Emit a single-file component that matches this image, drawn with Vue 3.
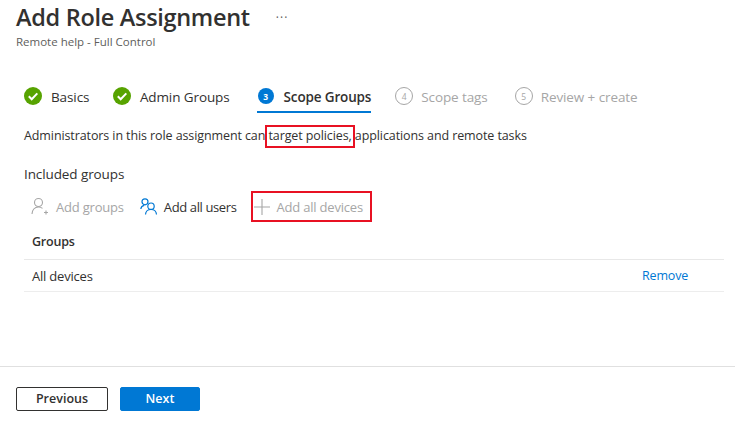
<script setup>
const steps = [
  { label: 'Basics', state: 'done' },
  { label: 'Admin Groups', state: 'done' },
  { label: 'Scope Groups', state: 'current', n: 3 },
  { label: 'Scope tags', state: 'todo', n: 4 },
  { label: 'Review + create', state: 'todo', n: 5 },
]
</script>

<template>
  <div class="page">
    <header class="head">
      <div class="title-row">
        <h1>Add Role Assignment</h1>
        <span class="more">···</span>
      </div>
      <div class="sub">Remote help - Full Control</div>
    </header>

    <nav class="steps">
      <div v-for="s in steps" :key="s.label" class="step" :class="s.state">
        <svg v-if="s.state === 'done'" class="ic" width="18" height="18" viewBox="0 0 18 18">
          <circle cx="9" cy="9" r="9" fill="#57a300" />
          <path d="M4.8 9.3l2.9 2.9 5.6-5.8" fill="none" stroke="#fff" stroke-width="2" />
        </svg>
        <span v-else class="num">{{ s.n }}</span>
        <span class="lbl">{{ s.label }}</span>
      </div>
    </nav>

    <p class="desc">Administrators in this role assignment can <span class="mark">target policies,</span> applications and remote tasks</p>

    <div class="included">Included groups</div>

    <div class="toolbar">
      <button class="tool off">
        <svg width="19" height="19" viewBox="0 0 19 19" fill="none" stroke="#a6a6a6" stroke-width="1.1">
          <circle cx="7.5" cy="5.5" r="4" />
          <path d="M1 17c0-4 2.6-7 6.5-7 1.7 0 3 .5 4 1.4" />
          <path d="M13 15.5h4M15 13.5v4" />
        </svg>
        <span>Add groups</span>
      </button>
      <button class="tool on">
        <svg width="18" height="18" viewBox="0 0 18 18" fill="none" stroke="#0078d4" stroke-width="1.2">
          <circle cx="5" cy="3.8" r="3" />
          <circle cx="11" cy="8.2" r="3.2" />
          <path d="M.8 11c.3-2 1.6-3.4 3.4-3.6" />
          <path d="M5.5 16.5c.2-3 2.5-5 5.5-5s5.3 2 5.5 5" />
        </svg>
        <span>Add all users</span>
      </button>
      <button class="tool off boxed">
        <svg width="16" height="16" viewBox="0 0 16 16" stroke="#a6a6a6" stroke-width="1.1">
          <path d="M8 0v16M0 8h16" />
        </svg>
        <span>Add all devices</span>
      </button>
    </div>

    <div class="table">
      <div class="thead">Groups</div>
      <div class="row">
        <span>All devices</span>
        <a class="remove">Remove</a>
      </div>
    </div>

    <footer class="foot">
      <button class="btn prev">Previous</button>
      <button class="btn next">Next</button>
    </footer>
  </div>
</template>

<style>
html, body { margin: 0; background: #fff; }
</style>

<style scoped>
.page {
  width: 735px;
  height: 427px;
  overflow: hidden;
  display: flex;
  flex-direction: column;
  font-family: "Open Sans", "Noto Sans", "Liberation Sans", sans-serif;
  font-size: 12.5px;
  letter-spacing: -0.2px;
  color: #323130;
  background: #fff;
}
.head { padding-left: 16px; height: 51px; }
.title-row { display: flex; align-items: center; height: 35px; }
h1 {
  margin: 0;
  font-size: 23.5px;
  font-weight: 600;
  line-height: 35px;
  letter-spacing: -0.3px;
  color: #323130;
}
.more { margin-left: 26px; font-size: 12px; color: #605e5c; letter-spacing: 1px; }
.sub { font-size: 11.5px; line-height: 16px; color: #605e5c; letter-spacing: 0; margin-top: -1px; }

.steps { display: flex; margin-top: 33px; padding-left: 24px; height: 29px; }
.step { display: flex; align-items: flex-start; padding-top: 2px; margin-right: 24px; height: 29px; box-sizing: border-box; }
.step:nth-child(1) { margin-right: 23.5px; }
.step:nth-child(2) { margin-right: 27px; }
.step:nth-child(4) { margin-right: 27px; }
.step .ic { margin-right: 9px; margin-top: 1px; }
.lbl { font-size: 13.5px; line-height: 22px; letter-spacing: -0.1px; }
.num {
  width: 16px;
  height: 16px;
  border-radius: 50%;
  box-sizing: border-box;
  margin: 2px 10px 0 1px;
  display: flex;
  align-items: center;
  justify-content: center;
  font-size: 8.5px;
  font-weight: 700;
  letter-spacing: 0;
}
.current { border-bottom: 2px solid #0078d4; }
.current .num { background: #0078d4; color: #fff; }
.current .lbl { font-weight: 600; letter-spacing: -0.15px; }
.todo { color: #a6a6a6; }
.todo .num { border: 1px solid #a6a6a6; width: 18px; height: 18px; margin: 1px 8px 0 0; font-weight: 400; }

.desc { margin: 13px 0 0 24px; font-size: 12.5px; letter-spacing: -0.1px; line-height: 20px; white-space: nowrap; }
.mark { position: relative; }
.mark::after {
  content: "";
  position: absolute;
  left: -3px;
  right: -3px;
  top: -2px;
  bottom: -4px;
  border: 2px solid #e81123;
  box-sizing: border-box;
}

.included { margin: 18px 0 0 24px; font-size: 13.5px; letter-spacing: -0.1px; line-height: 20px; }

.toolbar { display: flex; align-items: center; margin: 7px 0 0 31px; height: 31px; }
.tool {
  display: flex;
  align-items: center;
  height: 31px;
  padding: 0;
  border: 0;
  background: none;
  font: inherit;
  font-size: 13px;
  letter-spacing: -0.2px;
  color: inherit;
  white-space: nowrap;
}
.tool svg { margin-right: 6px; }
.off { color: #a6a6a6; }
.tool.on { margin-left: 16px; color: #323130; letter-spacing: -0.38px; }
.boxed {
  margin-left: 14px;
  border: 2px solid #e81123;
  padding: 0 7px 0 1px;
  box-sizing: border-box;
}
.boxed svg { margin-right: 7px; }

.table { margin: 4px 11px 0 24px; }
.thead {
  height: 34px;
  line-height: 32px;
  padding-left: 8px;
  font-weight: 600;
  box-sizing: border-box;
  border-bottom: 1px solid #e8e8e8;
}
.row {
  display: flex;
  justify-content: space-between;
  align-items: center;
  height: 32px;
  padding: 0 36px 0 8px;
  box-sizing: border-box;
  border-bottom: 1px solid #ededed;
  font-size: 13px;
}
.remove { color: #0078d4; font-size: 12.5px; }

.foot {
  margin-top: auto;
  height: 61px;
  border-top: 1px solid #e0e0e0;
  display: flex;
  gap: 12px;
  padding: 20px 0 0 16px;
  box-sizing: border-box;
}
.btn {
  height: 24px;
  border-radius: 2px;
  font: inherit;
  font-weight: 600;
  font-size: 12.5px;
  padding: 0 0 2px;
}
.prev { width: 92px; background: #fff; border: 1px solid #323130; color: #323130; }
.next { width: 80px; background: #0078d4; border: 1px solid #0078d4; color: #fff; }
</style>
